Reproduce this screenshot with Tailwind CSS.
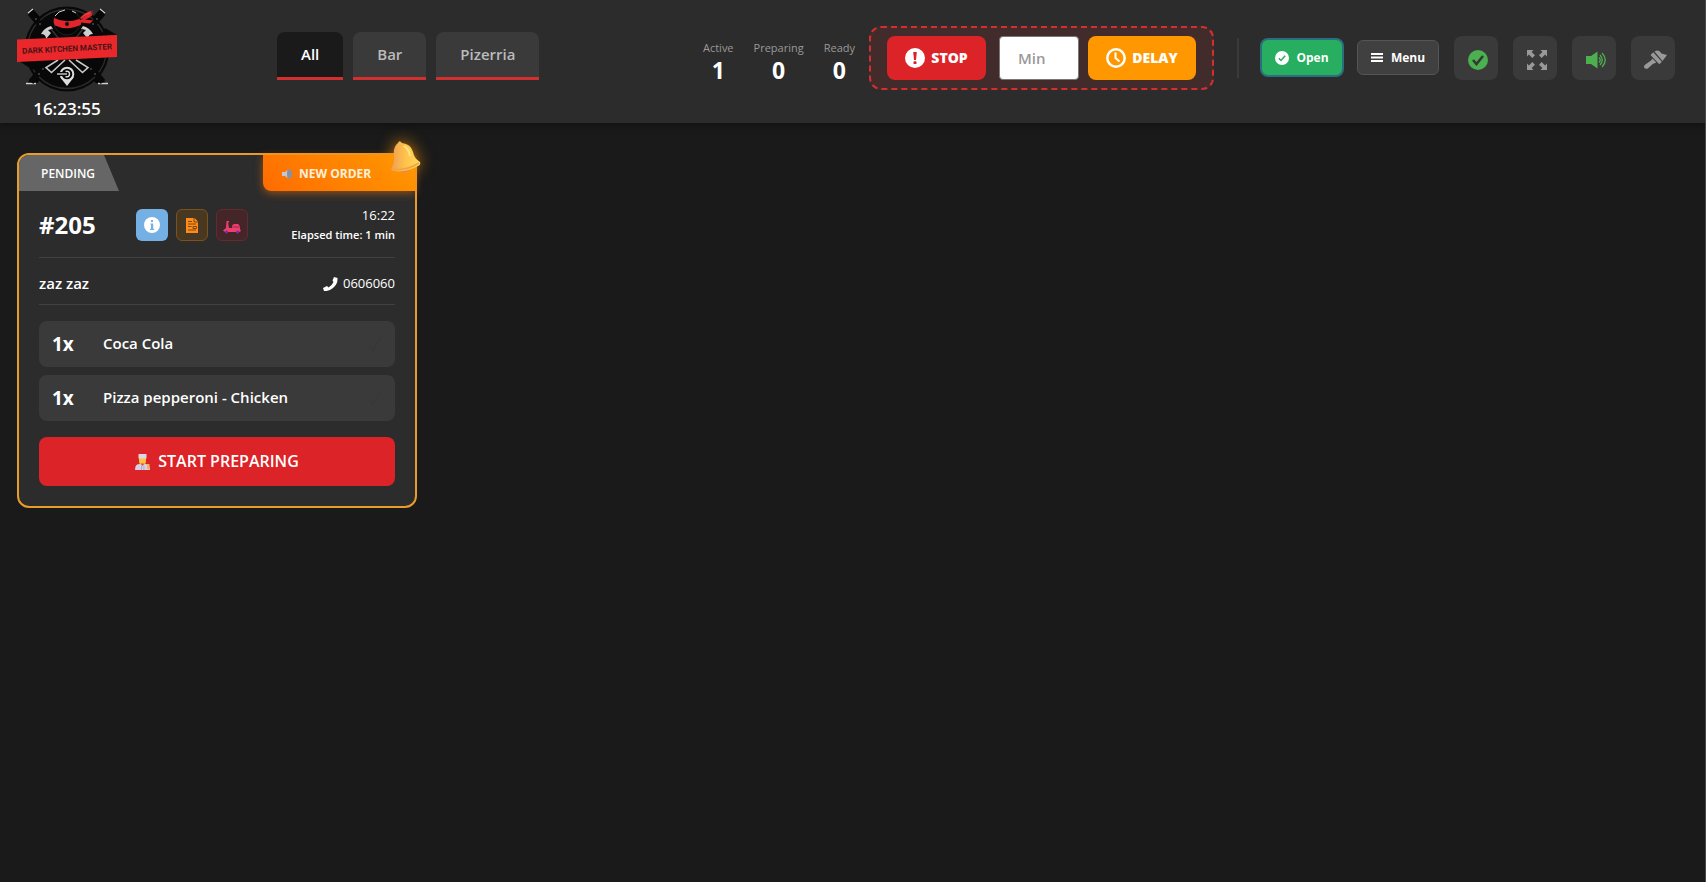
<!DOCTYPE html>
<html lang="en">

<head>
    <meta charset="UTF-8">
    <meta name="viewport" content="width=device-width, initial-scale=1.0">
    <script src="https://cdn.jsdelivr.net/npm/@tailwindcss/browser@4"></script>
    <title>Dark Kitchen Master</title>
</head>

<body class="min-h-screen border-r border-[#4a4a4a] bg-[#1a1a1a] font-['Open_Sans',sans-serif] text-white">
    <header class="relative flex items-center bg-[#2c2c2c] pl-[17px] pr-[30px] shadow-[0_2px_8px_rgba(0,0,0,0.4)]">
        <!-- Logo and clock -->
        <div class="flex w-[100px] shrink-0 flex-col items-center pt-[5px]">
            <svg class="w-[100px]" viewBox="0 0 100 87" role="img" aria-label="Dark Kitchen Master">
                <!-- knives -->
                <g fill="#050505">
                    <path d="M11 6l5-2 14 16-5 5z" />
                    <path d="M88 6l-5-2-14 16 5 5z" />
                    <path d="M24 58l12 5-16 15-10 1z" />
                    <path d="M75 58l-12 5 16 15 10 1z" />
                </g>
                <path d="M11 8l5-4M88 8l-5-4M9 78.500h10M91 78.500H81" stroke="#d0d0d0" stroke-width="1.3" />
                <circle cx="50" cy="44" r="42.500" fill="#080808" />
                <circle cx="50" cy="44" r="39.500" fill="none" stroke="#2c2c2c" stroke-width="1.3" />
                <path d="M13 8l14 16M86 8L72 24M30 58L14 77M70 58l16 19" stroke="#080808" stroke-width="6" />
                <g fill="#484848">
                    <circle cx="19" cy="14" r="1" /><circle cx="23" cy="19" r="1" /><circle cx="80" cy="14" r="1" /><circle cx="76" cy="19" r="1" />
                    <circle cx="22" cy="69" r="1" /><circle cx="26" cy="64" r="1" /><circle cx="78" cy="69" r="1" /><circle cx="74" cy="64" r="1" />
                </g>
                <!-- ribbon folds -->
                <path d="M88 23l12 7H84zM2 56l14 9 6-9z" fill="#080808" />
                <!-- cleavers -->
                <path d="M24 29q3-6 10-8l2 3-5 1 3 3-5 6q0-5-5-5zM76 29q-3-6-10-8l-2 3 5 1-3 3 5 6q0-5 5-5z" fill="#cfcfcf" />
                <path d="M34 24l8 10M66 24l-8 10" stroke="#333" stroke-width="1.500" />
                <path d="M41 55L29 62.500l5.500 5L48 55M59 55l12 7.500-5.500 5L52 55" fill="none" stroke="#c9c9c9" stroke-width="1.600" />
                <!-- ninja head -->
                <circle cx="50" cy="17" r="13" fill="#050505" stroke="#3a3a3a" stroke-width=".5" />
                <path d="M38 11q3-5 10-6M55 6l4 2" stroke="#ccc" stroke-width="1" fill="none" />
                <path d="M37 13q12 6 25 1l2 1q4-6 12-7.500L76 4.500l-1 6q-3 3-7 4l8 1-3 3-9-1v2q-13 7-26 1-2-3-1-7.500z" fill="#e3242a" />
                <path d="M63 13q5-6 12-7l-2 3q-5 1-9 5z" fill="#f03a3a" />
                <circle cx="50" cy="19" r="2" fill="#111" />
                <!-- chef pin -->
                <path d="M50 81l-7-9q7 3 14 0z" fill="#ddd" />
                <circle cx="50" cy="69" r="6.300" fill="#080808" stroke="#ddd" stroke-width="2" />
                <path d="M48.500 66.500q4-1 4 2.500t-4 2.500" fill="none" stroke="#ddd" stroke-width="1.500" />
                <path d="M39 69h10" stroke="#080808" stroke-width="4" />
                <path d="M40 69h10" stroke="#ddd" stroke-width="1.300" />
                <!-- ribbon -->
                <path d="M0 34.500L100 30l.5 22L0 57z" fill="#ea272b" />
                <text x="50" y="46.500" transform="rotate(-3 50 43)" text-anchor="middle" fill="#4a1416" class="font-[Roboto,sans-serif] text-[8px] font-bold">DARK KITCHEN MASTER</text>
            </svg>
            <time class="pt-[2px] text-[17px] leading-[29px] font-semibold">16:23:55</time>
        </div>

        <nav class="ml-[160px] flex gap-[10px] pb-3 text-[15px] leading-[21px] font-semibold">
            <button class="rounded-t-lg border-b-3 border-[#d32f2f] bg-[#1a1a1a] px-6 py-3 text-white">All</button>
            <button class="rounded-t-lg border-b-3 border-[#d32f2f] bg-[#3a3a3a] px-6 py-3 text-[#bbb]">Bar</button>
            <button class="rounded-t-lg border-b-3 border-[#d32f2f] bg-[#3a3a3a] px-6 py-3 text-[#bbb]">Pizerria</button>
        </nav>

        <div class="ml-auto flex items-center pb-2">
            <dl class="flex gap-5 pt-[6px] text-center">
                <div>
                    <dt class="text-[11px] leading-[18px] text-[#999]">Active</dt>
                    <dd class="text-[23px] leading-[26px] font-bold">1</dd>
                </div>
                <div>
                    <dt class="text-[11px] leading-[18px] text-[#999]">Preparing</dt>
                    <dd class="text-[23px] leading-[26px] font-bold">0</dd>
                </div>
                <div>
                    <dt class="text-[11px] leading-[18px] text-[#999]">Ready</dt>
                    <dd class="text-[23px] leading-[26px] font-bold">0</dd>
                </div>
            </dl>

            <form class="ml-[14px] flex items-center rounded-xl border-2 border-dashed border-[#d32f2f] bg-[#dc2626]/12 px-4 py-2 text-[14px] leading-5 font-extrabold">
                <button type="button" class="flex h-11 w-[99px] items-center justify-center gap-[6px] rounded-lg bg-[#dc2328]">
                    <svg class="size-5" viewBox="0 0 20 20">
                        <circle cx="10" cy="10" r="10" fill="#fff" />
                        <path d="M8.200 4h3.600l-.8 8H9z" fill="#dc2328" />
                        <rect x="8.500" y="13.300" width="3" height="2.700" rx=".6" fill="#dc2328" />
                    </svg>
                    STOP
                </button>
                <input type="text" aria-label="Delay in minutes" placeholder="Min" class="ml-[13px] h-11 w-20 rounded-[4px] border border-[#777] bg-white px-[18px] text-[15px] font-semibold text-[#333] placeholder:text-[#999]">
                <button type="button" class="ml-[9px] flex h-11 w-[108px] items-center justify-center gap-[6px] rounded-lg bg-[#ff9800]">
                    <svg class="size-5" viewBox="0 0 20 20" fill="none" stroke="#fff" stroke-width="2.500">
                        <circle cx="10" cy="10" r="8.700" />
                        <path d="M9.500 4.500V10l4 3.500" stroke-width="2" />
                    </svg>
                    DELAY
                </button>
            </form>

            <div class="ml-[23px] h-10 w-[2px] bg-[#3a3a3a]"></div>

            <button class="ml-[21px] flex h-[39px] w-[84px] items-center justify-center gap-[7px] rounded-lg border-2 border-[#2a6f80] bg-[#27ae60] text-[12px] font-bold">
                <svg class="size-[14px]" viewBox="0 0 14 14">
                    <circle cx="7" cy="7" r="7" fill="#fff" />
                    <path d="M3.800 7.200l2.200 2.300 4.200-4.800" fill="none" stroke="#27ae60" stroke-width="1.500" />
                </svg>
                Open
            </button>
            <button class="ml-[13px] flex h-[35px] w-[82px] items-center justify-center gap-2 rounded-md border border-[#555] bg-[#404040] text-[12px] font-bold">
                <svg class="size-3" viewBox="0 0 12 12" fill="#fff">
                    <path d="M0 1h12v2H0zM0 4.500h12v2H0zM0 8h12v2H0z" />
                </svg>
                Menu
            </button>

            <div class="ml-[15px] flex gap-[15px]">
                <button aria-label="Auto accept" class="flex size-11 items-center justify-center rounded-lg bg-[#3a3a3a] pt-1 pl-1">
                    <svg class="size-5" viewBox="0 0 20 20">
                        <circle cx="10" cy="10" r="10" fill="#4caf50" />
                        <path d="M5 10l3.500 4L15 6" fill="none" stroke="#303a30" stroke-width="2.500" />
                    </svg>
                </button>
                <button aria-label="Full screen" class="flex size-11 items-center justify-center rounded-lg bg-[#3a3a3a] pt-1 pl-1">
                    <svg class="size-5" viewBox="0 0 20 20" fill="#999">
                        <path d="M0 0h6.500L4.600 1.900 8 5.300 5.300 8 1.900 4.600 0 6.500z" />
                        <path d="M20 0v6.500l-1.900-1.900L14.700 8 12 5.300l3.400-3.400L13.500 0z" />
                        <path d="M0 20v-6.500l1.900 1.900L5.300 12 8 14.700l-3.400 3.400L6.500 20z" />
                        <path d="M20 20h-6.500l1.900-1.900-3.400-3.400 2.700-2.700 3.400 3.400 1.900-1.900z" />
                    </svg>
                </button>
                <button aria-label="Sound" class="flex size-11 items-center justify-center rounded-lg bg-[#3a3a3a] pt-1 pl-1">
                    <svg class="size-5" viewBox="0 0 20 20">
                        <path d="M0 6h5l6.500-4.500v17L5 14H0z" fill="#4caf50" />
                        <path d="M13 7.500q2.500 2.500 0 5M14 5q4.500 5 0 10M16 3q6.500 7 0 14" fill="none" stroke="#4caf50" stroke-width="1.300" />
                    </svg>
                </button>
                <button aria-label="Theme" class="flex size-11 items-center justify-center rounded-lg bg-[#3a3a3a] pt-1 pl-1">
                    <svg class="h-[19px] w-[23px]" viewBox="0 0 23 19" fill="#999">
                        <path d="M10.500 1.500Q15-1 17.500 3.500L23 5l-4.500 6z" />
                        <path d="M9.300 2.300l8.500 9.500-2.500 2.500L6.500 5z" />
                        <path d="M8.500 8.500l3.800 4-3.500 1.500-5 4.500q-2.300 1-3.500-.8-.8-1.700.7-3l6-4.200z" />
                    </svg>
                </button>
            </div>
        </div>
    </header>

    <main class="grid grid-cols-[repeat(auto-fill,400px)] items-start gap-5 px-[17px] pt-[30px]">
        <article class="relative rounded-xl border-2 border-[#e89c2c] bg-[#2c2c2c]">
            <div class="flex items-start justify-between">
                <span class="w-[100px] rounded-tl-[10px] bg-[#666] pt-[2px] pl-[22px] text-[12px] leading-[34px] font-semibold [clip-path:polygon(0_0,85%_0,100%_100%,0_100%)]">PENDING</span>
                <span class="flex w-[152px] items-center gap-[6px] rounded-tr-[10px] rounded-bl-lg bg-linear-45 from-[#ff6b00] to-[#ff9800] pt-[2px] pl-[18px] text-[12px] leading-[34px] font-bold text-[#fff0dc] shadow-[0_2px_8px_rgba(255,120,0,0.5)]">
                    <svg class="size-3" viewBox="0 0 12 12">
                        <path d="M1 4h3l4-3v10L4 8H1z" fill="#c3c8d0" />
                        <ellipse cx="8" cy="6" rx="2" ry="5" fill="#8c8f99" />
                        <path d="M10 3q2 3 0 6" fill="none" stroke="#5f9bd8" />
                    </svg>
                    NEW ORDER
                </span>
            </div>
            <!-- Ringing bell, hangs over the corner -->
            <svg class="absolute -top-[15px] -right-[6px] h-[34px] w-[31px] drop-shadow-[0_0_8px_rgba(255,152,0,0.8)]" viewBox="0 0 31 34">
                <defs>
                    <linearGradient id="bell" x1="0" x2="1">
                        <stop offset="0" stop-color="#ef9f55" />
                        <stop offset=".5" stop-color="#ffc34a" />
                        <stop offset="1" stop-color="#ffdc60" />
                    </linearGradient>
                </defs>
                <ellipse cx="14" cy="30" rx="5" ry="2.500" fill="#e58a50" />
                <path d="M8 3q1-3 3-1l1 1q9 1 11 9 1 6 7 10 1 3-2 4-12 7-25 5-3-1-1-4 3-4 2-12Q3 7 8 3z" fill="url(#bell)" />
                <path d="M3 29q13 2 26-6" fill="none" stroke="#f1a243" stroke-width="1.500" />
                <path d="M14 6q5 3 6 10" fill="none" stroke="#ffe58a" stroke-width="2" />
            </svg>

            <div class="px-5 pb-5">
                <div class="flex items-center border-b border-[#404040] pt-[14px] pb-3">
                    <h2 class="w-[97px] text-[24px] leading-8 font-bold">#205</h2>
                    <div class="flex gap-2">
                        <button aria-label="Order details" class="flex size-8 items-center justify-center rounded-md bg-[#74b0e4]">
                            <svg class="size-4" viewBox="0 0 16 16">
                                <circle cx="8" cy="8" r="8" fill="#fff" />
                                <path d="M6.500 6.500h2.700v5.300h1V13H6v-1.200h1V7.600h-.5zM7 3h2v2H7z" fill="#74b0e4" />
                            </svg>
                        </button>
                        <button aria-label="Print ticket" class="flex size-8 items-center justify-center rounded-md border border-[#7a531d] bg-[#483821]">
                            <svg class="h-[15px] w-3" viewBox="0 0 12 15">
                                <path d="M0 0h8.500L12 3.500V15H0z" fill="#ff8c1a" />
                                <path d="M8 0v4h4M2 3.500h4M2 6h8M2 8.500h3.500M7 8.500h3.500v2H7zM2 12h8" fill="none" stroke="#5a3810" stroke-width=".8" />
                            </svg>
                        </button>
                        <button aria-label="Delivery" class="flex size-8 items-center justify-center rounded-md border border-[#642a30] bg-[#442629] pt-[5px]">
                            <svg class="h-[13px] w-[18px]" viewBox="0 0 18 13">
                                <path d="M3.500 0H6v1.500H5L6 7h3Q8.500 3 12 3h3q2 1 2 5l1 2-2 1H2L0 9.500 3 7z" fill="#ee3f6c" />
                                <path d="M9.500 6h6.500" stroke="#b82d63" stroke-width="1.500" />
                                <circle cx="3.500" cy="11" r="1.500" fill="#7a2bb0" />
                                <circle cx="14.500" cy="11" r="1.500" fill="#7a2bb0" />
                            </svg>
                        </button>
                    </div>
                    <div class="ml-auto text-right">
                        <p class="text-[13px] leading-5">16:22</p>
                        <p class="text-[11px] leading-5 font-semibold">Elapsed time: 1 min</p>
                    </div>
                </div>

                <div class="flex items-center justify-between border-b border-[#404040] pt-[15px] pb-[10px]">
                    <p class="text-[15px] leading-[21px] font-semibold">zaz zaz</p>
                    <a href="tel:0606060" class="flex items-center gap-[5px] text-[13px] leading-[21px]">
                        <svg class="h-[14px] w-[15px]" viewBox="0 0 15 14" fill="#fff">
                            <path d="M11 0l3.500 1Q15 7 10 11 6 14.500 1 14L0 11l4-2 1.500 1.500Q9 8.500 10.500 5L9.500 3.500z" />
                        </svg>
                        0606060
                    </a>
                </div>

                <ul class="flex flex-col gap-2 py-4">
                    <li class="flex items-center rounded-lg bg-[#3a3a3a] px-[13px] py-[10px]">
                        <span class="w-[51px] text-[19px] leading-[26px] font-bold">1x</span>
                        <span class="flex-1 pb-[2px] text-[15px] leading-6 font-semibold">Coca Cola</span>
                        <svg class="h-4 w-[14px]" viewBox="0 0 14 16" fill="none" stroke="#363939" stroke-width="1.500">
                            <path d="M1 9l4 5L13 1" />
                        </svg>
                    </li>
                    <li class="flex items-center rounded-lg bg-[#3a3a3a] px-[13px] py-[10px]">
                        <span class="w-[51px] text-[19px] leading-[26px] font-bold">1x</span>
                        <span class="flex-1 pb-[2px] text-[15px] leading-6 font-semibold">Pizza pepperoni - Chicken</span>
                        <svg class="h-4 w-[14px]" viewBox="0 0 14 16" fill="none" stroke="#363939" stroke-width="1.500">
                            <path d="M1 9l4 5L13 1" />
                        </svg>
                    </li>
                </ul>

                <button class="flex w-full items-center justify-center gap-2 rounded-lg bg-[#dc2328] py-[14px] text-[16px] leading-[21px] font-semibold">
                    <svg class="h-4 w-[15px]" viewBox="0 0 15 16">
                        <path d="M0 16q0-6 4-6h7q4 0 4 6z" fill="#d5d0e5" />
                        <path d="M4 4h7v3q0 4-3.500 4T4 7z" fill="#ffc23d" />
                        <path d="M3.500 0h8v4.500h-8z" fill="#dcd6e6" />
                        <path d="M5.500 9.500h4l-2 2.500z" fill="#e04850" />
                        <path d="M12 10h2.500v5H12z" fill="#f8b05a" />
                        <path d="M6 13h.8M8.500 13h.8M6 15h.8M8.500 15h.8" stroke="#776f9a" />
                    </svg>
                    START PREPARING
                </button>
            </div>
        </article>
    </main>
</body>

</html>
